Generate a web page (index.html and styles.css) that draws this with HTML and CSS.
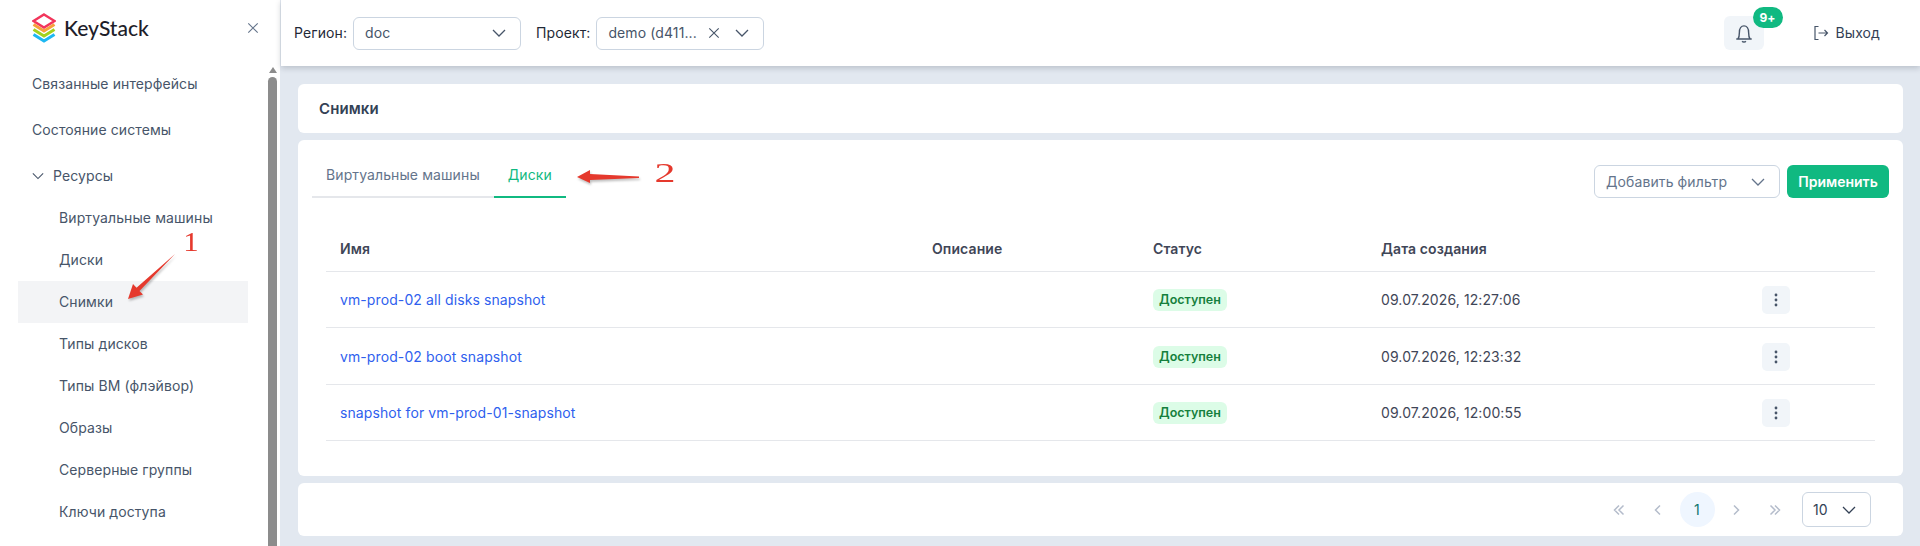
FILE: index.html
```html
<!DOCTYPE html>
<html lang="ru">
<head>
	<meta charset="UTF-8">
	<title>Снимки</title>
	<link rel="stylesheet" href="styles.css">
</head>
<body>
	<svg class="defs" width="0" height="0">
		<symbol id="chev" viewBox="0 0 14 14"><path d="M1 4l6 6 6-6" fill="none" stroke="currentColor" stroke-width="1.3"/></symbol>
		<symbol id="cross" viewBox="0 0 14 14"><path d="M1.5 1.5l11 11M12.5 1.5l-11 11" fill="none" stroke="currentColor" stroke-width="1.3"/></symbol>
		<symbol id="dots" viewBox="0 0 16 16"><circle cx="8" cy="3" r="1.4" fill="currentColor"/><circle cx="8" cy="8" r="1.4" fill="currentColor"/><circle cx="8" cy="13" r="1.4" fill="currentColor"/></symbol>
	</svg>

	<aside class="sidebar">
		<div class="side-head">
			<svg class="logo" viewBox="0 0 24 30" width="24" height="30">
				<path d="M1.500 21.500L12 28l10.500-6.500" fill="none" stroke="#1db8f2" stroke-width="3"/>
				<path d="M1.500 16.500L12 23l10.500-6.500" fill="none" stroke="#a4d21d" stroke-width="3"/>
				<path d="M1.500 11.500L12 18l10.500-6.500" fill="none" stroke="#f7a13b" stroke-width="3"/>
				<path d="M12 1.500L22.500 8 12 14.500 1.500 8z" fill="#fff" stroke="#f2355b" stroke-width="2.400"/>
			</svg>
			<span class="logo-text">KeyStack</span>
			<svg class="side-close" width="12" height="12"><use href="#cross"/></svg>
		</div>
		<div class="side-body">
			<ul class="menu">
				<li>Связанные интерфейсы</li>
				<li>Состояние системы</li>
				<li class="menu-group"><svg width="12" height="12"><use href="#chev"/></svg>Ресурсы</li>
				<li class="sub">Виртуальные машины</li>
				<li class="sub">Диски</li>
				<li class="sub active">Снимки</li>
				<li class="sub">Типы дисков</li>
				<li class="sub">Типы ВМ (флэйвор)</li>
				<li class="sub">Образы</li>
				<li class="sub">Серверные группы</li>
				<li class="sub">Ключи доступа</li>
			</ul>
			<div class="scroll">
				<div class="scroll-up"></div>
				<div class="scroll-thumb"></div>
			</div>
		</div>
	</aside>

	<div class="main">
		<header class="topbar">
			<label class="top-label">Регион:</label>
			<div class="select top-select"><span class="select-val">doc</span><svg width="14" height="14"><use href="#chev"/></svg></div>
			<label class="top-label second">Проект:</label>
			<div class="select top-select"><span class="select-val">demo (d411...</span><svg class="clear" width="12" height="12"><use href="#cross"/></svg><svg width="14" height="14"><use href="#chev"/></svg></div>
			<div class="bell">
				<svg width="22" height="22" viewBox="0 0 20 20"><path d="M3 15.500h14M4.500 15.500c1 -1.500 1.300 -3 1.300 -6 0 -3.500 1.700 -6 4.200 -6s4.200 2.500 4.200 6c0 3 .3 4.500 1.300 6M8.300 17.500a2 1.600 0 0 0 3.400 0" fill="none" stroke="#475569" stroke-width="1.300"/></svg>
				<span class="badge">9+</span>
			</div>
			<div class="logout">
				<svg width="16" height="16" viewBox="0 0 16 16"><path d="M5.500 1.500H2v13h3.500M5.500 8h9M11.500 5l3 3-3 3" fill="none" stroke="#475569" stroke-width="1.200"/></svg>
				Выход
			</div>
		</header>

		<div class="content">
			<section class="card title-card">Снимки</section>

			<section class="card list-card">
				<div class="toolbar">
					<div class="tabs">
						<a class="tab">Виртуальные машины</a>
						<a class="tab current">Диски</a>
					</div>
					<div class="select filter"><span class="select-val">Добавить фильтр</span><svg width="14" height="14"><use href="#chev"/></svg></div>
					<button class="apply">Применить</button>
				</div>
				<table class="grid">
					<colgroup><col class="c-name"><col class="c-desc"><col class="c-status"><col class="c-date"><col></colgroup>
					<thead>
						<tr><th>Имя</th><th>Описание</th><th>Статус</th><th>Дата создания</th><th></th></tr>
					</thead>
					<tbody>
						<tr>
							<td><a class="link">vm-prod-02 all disks snapshot</a></td><td></td>
							<td><span class="tag">Доступен</span></td><td>09.07.2026, 12:27:06</td>
							<td><span class="more"><svg width="16" height="16"><use href="#dots"/></svg></span></td>
						</tr>
						<tr class="row-tall">
							<td><a class="link">vm-prod-02 boot snapshot</a></td><td></td>
							<td><span class="tag">Доступен</span></td><td>09.07.2026, 12:23:32</td>
							<td><span class="more"><svg width="16" height="16"><use href="#dots"/></svg></span></td>
						</tr>
						<tr>
							<td><a class="link">snapshot for vm-prod-01-snapshot</a></td><td></td>
							<td><span class="tag">Доступен</span></td><td>09.07.2026, 12:00:55</td>
							<td><span class="more"><svg width="16" height="16"><use href="#dots"/></svg></span></td>
						</tr>
					</tbody>
				</table>
			</section>

			<section class="card pager-card">
				<svg class="pg-arrow" width="12" height="12" viewBox="0 0 12 12"><path d="M6 1.500L1.500 6 6 10.500M10.500 1.500L6 6l4.500 4.500" fill="none" stroke="currentColor" stroke-width="1.500"/></svg>
				<svg class="pg-arrow" width="12" height="12" viewBox="0 0 12 12"><path d="M8 1.500L3.500 6 8 10.500" fill="none" stroke="currentColor" stroke-width="1.500"/></svg>
				<span class="pg-num">1</span>
				<svg class="pg-arrow" width="12" height="12" viewBox="0 0 12 12"><path d="M4 1.500L8.500 6 4 10.500" fill="none" stroke="currentColor" stroke-width="1.500"/></svg>
				<svg class="pg-arrow" width="12" height="12" viewBox="0 0 12 12"><path d="M1.500 1.500L6 6l-4.500 4.500M6 1.500L10.500 6 6 10.500" fill="none" stroke="currentColor" stroke-width="1.500"/></svg>
				<div class="select pg-size"><span class="select-val">10</span><svg width="14" height="14"><use href="#chev"/></svg></div>
			</section>
		</div>
	</div>

	<!-- red marks drawn over the screenshot -->
	<svg class="marks" width="1920" height="546">
		<path d="M175 254L139.500 291 143 294.500 128 299 133 284 136.500 287.700z" fill="#e5392d"/>
		<path d="M639 176.500L590 174v-4L577 177l13 6v-3l49-2z" fill="#e5392d"/>
	</svg>
	<span class="mark mark-1">1</span>
	<span class="mark mark-2">2</span>
</body>
</html>
```

FILE: styles.css
```css
*{
	box-sizing: border-box;
}
body,ul,li{
	margin:0;
	padding:0;
}
ul{
	list-style-type: none;
}
body{
	display: flex;
	width:1920px;
	height:546px;
	overflow: hidden;
	font:14px/20px Inter,"Noto Sans",sans-serif;
	letter-spacing: .1px;
	color:#334155;
	background:#e2e8f0;
}
.defs{
	position: absolute;
}

/* sidebar */
.sidebar{
	flex:0 0 280px;
	background:#fff;
}
.side-head{
	display: flex;
	align-items: center;
	height:58px;
	padding:0 21px 2px 32px;
}
.logo{
	flex:none;
}
.logo-text{
	margin-left:8px;
	font:500 21px/30px Lato,sans-serif;
	letter-spacing: 0;
	color:#1e1e2a;
}
.side-close{
	margin-left:auto;
	color:#64748b;
}
.side-body{
	display: flex;
	padding:3px 3px 0 18px;
}
.menu{
	width:230px;
	color:#475569;
}
.menu li{
	display: flex;
	align-items: center;
	height:46px;
	padding-left:14px;
	white-space: nowrap;
}
.menu li.menu-group{
	height:44px;
	padding-top:2px;
	gap:9px;
}
.menu li.sub{
	height:42px;
	padding-left:41px;
}
.menu li.active{
	background:#f3f4f6;
}
.scroll{
	margin-left:20px;
	width:9px;
}
.scroll-up{
	width:0;
	margin:6px auto 0;
	border:4.5px solid transparent;
	border-top:0;
	border-bottom:6px solid #8c8c8c;
}
.scroll-thumb{
	height:480px;
	margin-top:4px;
	background:#8c8c8c;
	border-radius: 5px 5px 0 0;
}

/* top bar */
.main{
	flex:1;
	min-width:0;
	border-left:1px solid #e2e8f0;
}
.topbar{
	position: relative;
	display: flex;
	align-items: center;
	height:66px;
	padding:0 40px 0 13px;
	background:#fff;
	box-shadow: 0 2px 6px rgba(15,23,42,.2);
}
.top-label{
	color:#1f2937;
	margin-right:6px;
}
.top-label.second{
	margin-left:15px;
}
.select{
	display: flex;
	align-items: center;
	border:1px solid #cbd5e1;
	border-radius: 6px;
	background:#fff;
	color:#475569;
}
.select-val{
	flex:1;
	white-space: nowrap;
}
.top-select{
	width:168px;
	height:33px;
	padding:0 14px 0 11px;
}
.clear{
	margin-right:15px;
}
.bell{
	position: relative;
	display: flex;
	align-items: center;
	justify-content: center;
	width:40px;
	height:34px;
	margin-left:auto;
	background:#f1f5f9;
	border-radius: 6px;
}
.badge{
	position: absolute;
	top:-9px;
	left:29px;
	width:30px;
	height:21px;
	background:#10b981;
	border-radius: 11px;
	color:#fff;
	font:700 12px/21px Inter,sans-serif;
	text-align: center;
}
.logout{
	display: flex;
	align-items: center;
	gap:7px;
	margin-left:49px;
	color:#334155;
}

/* content */
.content{
	display: flex;
	flex-direction: column;
	gap:7px;
	padding:18px 17px 0;
}
.card{
	background:#fff;
	border-radius: 6px;
}
.title-card{
	height:49px;
	padding:0 21px;
	font:600 15px/49px Inter,sans-serif;
	color:#334155;
}
.list-card{
	height:336px;
	padding:13px 14px 0;
}
.toolbar{
	display: flex;
	align-items: flex-end;
}
.tabs{
	display: flex;
	margin-right:auto;
}
.tab{
	height:45px;
	padding:12px 14px 0;
	color:#64748b;
	border-bottom:2px solid #e5e7eb;
}
.tab.current{
	color:#10b981;
	padding:12px 14px 0;
	border-bottom-color:#10b981;
}
.filter{
	width:186px;
	height:33px;
	padding:0 14px 0 11px;
	color:#64748b;
}
.apply{
	width:102px;
	height:33px;
	margin-left:7px;
	border:0;
	border-radius: 6px;
	background:#10b981;
	color:#fff;
	font:600 14px Inter,sans-serif;
}
.grid{
	width:1549px;
	margin:27px 14px 0;
	border-collapse: collapse;
	table-layout: fixed;
}
.c-name{width:592px;}
.c-desc{width:221px;}
.c-status{width:228px;}
.c-date{width:381px;}
.grid th{
	height:46px;
	padding:2px 14px 0;
	border-bottom:1px solid #e5e7eb;
	text-align: left;
	font-weight:600;
	color:#3f4657;
}
.grid td{
	height:56px;
	padding:2px 14px 0;
	border-bottom:1px solid #e5e7eb;
	color:#3f4657;
}
.grid .row-tall td{
	height:57px;
}
.link{
	color:#2f5fee;
}
.tag{
	display: inline-block;
	height:22px;
	padding:0 6px;
	background:#dcfce7;
	border-radius: 6px;
	color:#15803d;
	font:600 12.5px/22px Inter,sans-serif;
	letter-spacing: 0;
	vertical-align: middle;
}
.more{
	display: flex;
	align-items: center;
	justify-content: center;
	width:28px;
	height:28px;
	background:#f1f5f9;
	border-radius: 5px;
	color:#475569;
}
.pager-card{
	display: flex;
	align-items: center;
	justify-content: flex-end;
	height:53px;
	padding-right:32px;
}
.pg-arrow{
	flex:none;
	margin:0 13.5px;
	color:#b4bccb;
}
.pg-num{
	width:35px;
	height:35px;
	margin:0 2px;
	border-radius: 50%;
	background:#eff6ff;
	color:#0f766e;
	line-height:35px;
	text-align: center;
}
.pg-size{
	width:69px;
	height:35px;
	margin-left:7.5px;
	padding:0 14px 0 10px;
	color:#334155;
}

/* marks over the page */
.marks{
	position: absolute;
	top:0;
	left:0;
	pointer-events: none;
	filter: drop-shadow(1px 2px 1px rgba(0,0,0,.25));
}
.mark{
	position: absolute;
	font:28px/30px "Liberation Serif",serif;
	color:#e5392d;
}
.mark-1{
	left:184px;
	top:227px;
	transform: scaleX(1.1);
}
.mark-2{
	left:658px;
	top:158px;
	transform: scaleX(1.5);
}
```
